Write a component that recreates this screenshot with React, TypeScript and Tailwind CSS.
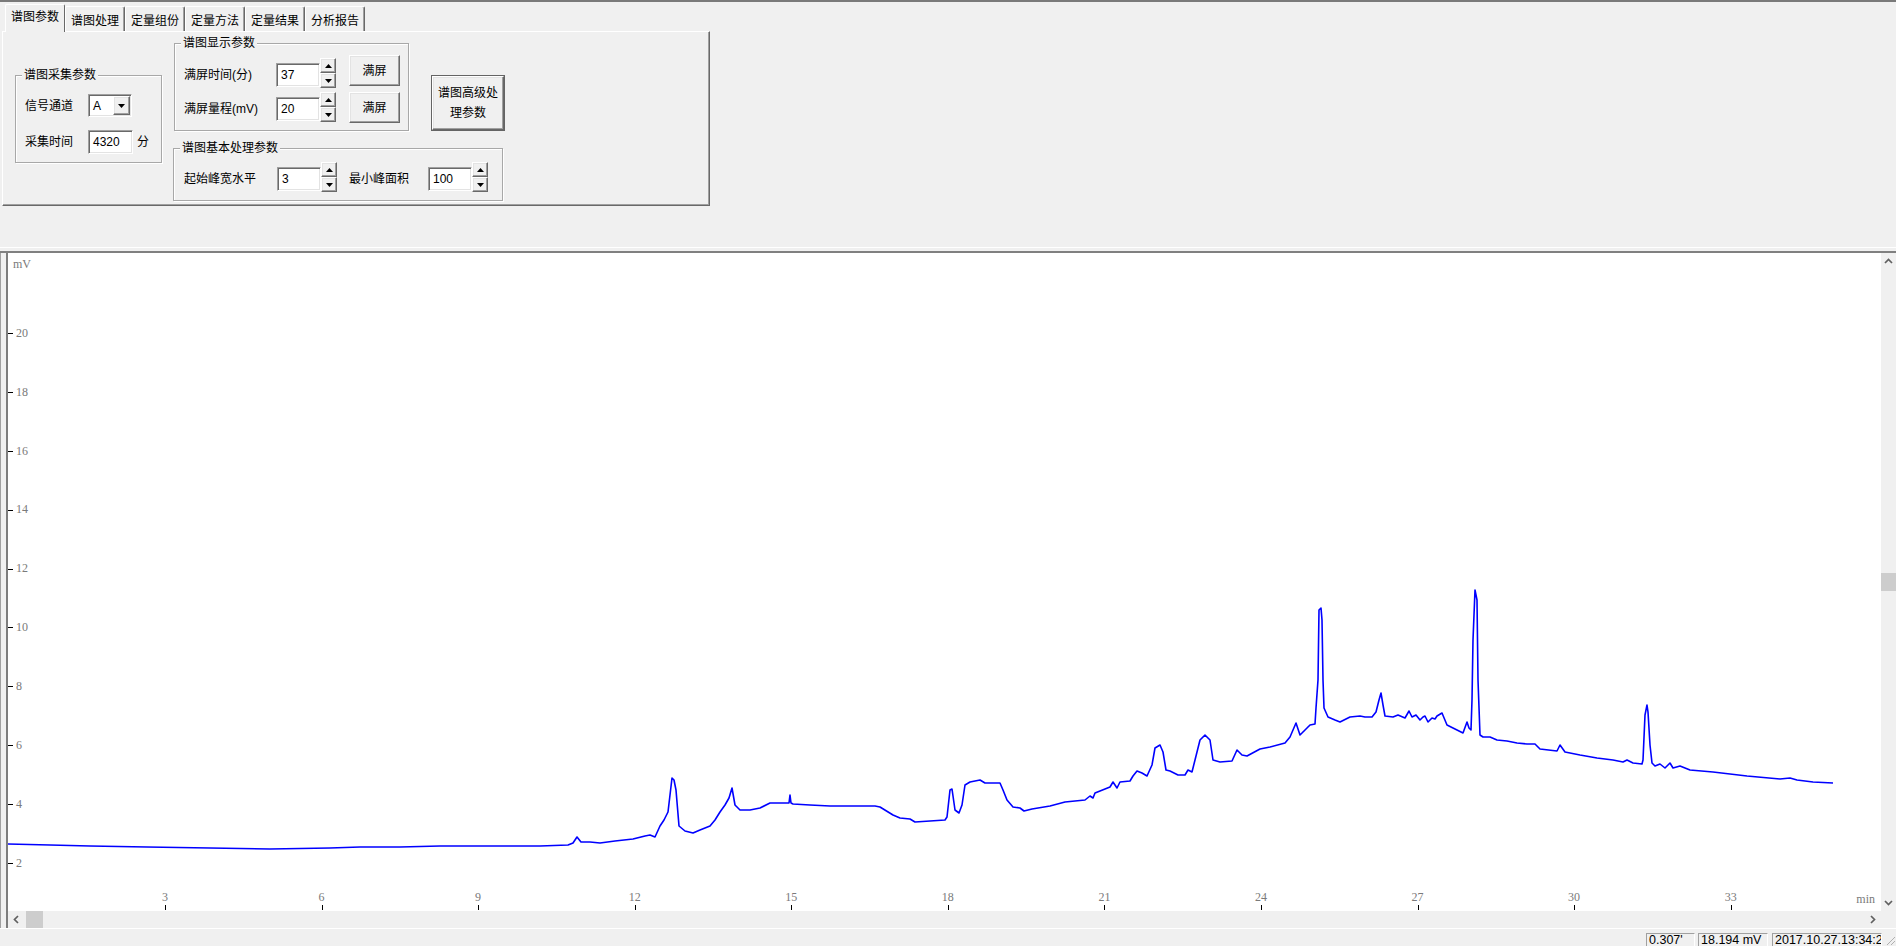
import React from "react";

const tabs = ["谱图参数", "谱图处理", "定量组份", "定量方法", "定量结果", "分析报告"];

const raised =
  "bg-[#f0f0f0] border border-t-white border-l-white border-r-[#696969] border-b-[#696969] shadow-[inset_-1px_-1px_0_#a0a0a0,inset_1px_1px_0_#e3e3e3]";
const sunken =
  "bg-white border border-t-[#a0a0a0] border-l-[#a0a0a0] border-r-white border-b-white shadow-[inset_1px_1px_0_#696969,inset_-1px_-1px_0_#e3e3e3]";

// plot scale, in screen px: 52.19 px per minute, 29.44 px per mV
const xOf = (t: number) => 8.4 + 52.19 * t;
const yOf = (mv: number) => 863 - (mv - 2) * 29.44;

// detector trace, sampled in screen px
const trace: [number, number][] = [
  [8, 844], [50, 845], [90, 846], [147, 847], [210, 848], [270, 849], [330, 848], [360, 847], [400, 847],
  [440, 846], [500, 846], [540, 846], [568, 845], [573, 843], [577, 837], [581, 842], [590, 842], [600, 843],
  [615, 841], [633, 839], [645, 836], [650, 835], [655, 837], [660, 826], [664, 820], [668, 812], [670, 795],
  [672, 778], [674, 780], [676, 790], [679, 826], [685, 831], [693, 833], [700, 830], [710, 826], [715, 820],
  [720, 812], [725, 805], [729, 798], [732, 788], [735, 805], [740, 810], [750, 810], [760, 808], [770, 803],
  [783, 803], [789, 803], [790, 795], [791, 803], [793, 804], [810, 805], [830, 806], [875, 806], [880, 807],
  [893, 815], [900, 818], [910, 819], [915, 822], [930, 821], [945, 820], [947, 817], [950, 790], [952, 789],
  [955, 810], [959, 813], [962, 805], [965, 785], [970, 782], [980, 780], [985, 783], [1000, 783], [1003, 790],
  [1007, 800], [1013, 807], [1020, 808], [1024, 811], [1032, 809], [1050, 806], [1065, 802], [1085, 800],
  [1090, 796], [1093, 798], [1095, 793], [1100, 791], [1110, 787], [1113, 782], [1117, 788], [1120, 782],
  [1130, 781], [1133, 776], [1137, 771], [1142, 773], [1147, 776], [1152, 765], [1155, 748], [1160, 745],
  [1163, 752], [1166, 770], [1170, 771], [1178, 775], [1185, 775], [1188, 770], [1192, 772], [1195, 760],
  [1200, 740], [1205, 735], [1210, 740], [1213, 760], [1220, 762], [1232, 761], [1237, 750], [1242, 755],
  [1247, 756], [1260, 749], [1270, 747], [1285, 743], [1290, 737], [1293, 730], [1296, 723], [1300, 735],
  [1305, 730], [1310, 725], [1315, 724], [1316, 708], [1318, 680], [1319, 610], [1321, 608], [1322, 620],
  [1323, 680], [1324, 708], [1328, 717], [1335, 720], [1340, 722], [1350, 717], [1360, 716], [1365, 717],
  [1372, 717], [1376, 712], [1379, 700], [1381, 693], [1383, 705], [1385, 716], [1393, 717], [1398, 715],
  [1405, 718], [1409, 711], [1412, 717], [1416, 715], [1420, 720], [1423, 717], [1425, 716], [1428, 722],
  [1432, 718], [1435, 719], [1437, 716], [1442, 713], [1447, 725], [1453, 728], [1457, 730], [1463, 733],
  [1467, 722], [1469, 728], [1471, 730], [1472, 700], [1473, 640], [1475, 590], [1477, 600], [1478, 680],
  [1480, 735], [1483, 737], [1490, 737], [1497, 740], [1507, 741], [1517, 743], [1527, 744], [1535, 744],
  [1540, 749], [1557, 751], [1560, 745], [1565, 752], [1580, 755], [1597, 758], [1613, 760], [1623, 762],
  [1627, 760], [1633, 763], [1642, 764], [1643, 760], [1645, 715], [1647, 705], [1648, 712], [1650, 745],
  [1652, 763], [1655, 766], [1660, 764], [1665, 768], [1670, 763], [1673, 768], [1680, 766], [1690, 770],
  [1713, 772], [1747, 776], [1780, 779], [1790, 778], [1797, 780], [1813, 782], [1833, 783],
];

function Tri({ up }: { up?: boolean }) {
  return (
    <svg width={7} height={4} viewBox="0 0 7 4">
      <path d={up ? "M0 4H7L3.5 0Z" : "M0 0H7L3.5 4Z"} fill="#000" />
    </svg>
  );
}

function Chevron({ dir }: { dir: "up" | "down" | "left" | "right" }) {
  const d = {
    up: "M1 6L4.5 2.5L8 6",
    down: "M1 3L4.5 6.5L8 3",
    left: "M6 1L2.5 4.5L6 8",
    right: "M3 1L6.5 4.5L3 8",
  }[dir];
  return (
    <svg width={9} height={9} viewBox="0 0 9 9">
      <path d={d} fill="none" stroke="#606060" strokeWidth={1.7} />
    </svg>
  );
}

function Spinner() {
  return (
    <div className="flex flex-col w-[16px] h-[30px]">
      <div className={raised + " flex-1 flex items-center justify-center"}>
        <Tri up />
      </div>
      <div className={raised + " flex-1 flex items-center justify-center"}>
        <Tri />
      </div>
    </div>
  );
}

function NumberField({ label, labelW, value }: { label: string; labelW: string; value: string }) {
  return (
    <div className="flex items-end">
      <div className={labelW + " h-[24px] mb-[1px] flex items-center leading-none"}>{label}</div>
      <div className={sunken + " w-[44px] h-[24px] mb-[1px] flex items-center px-[4px] leading-none"}>{value}</div>
      <Spinner />
    </div>
  );
}

function GroupBox({ title, className, children }: { title: string; className: string; children: React.ReactNode }) {
  return (
    <div
      className={
        "relative border border-[#a8a8a8] shadow-[inset_1px_1px_0_#fff,1px_1px_0_#fff] " + className
      }
    >
      <span className="absolute -top-[9px] left-[6px] bg-[#f0f0f0] px-[2px] leading-[16px]">{title}</span>
      {children}
    </div>
  );
}

function ParamTabs() {
  return (
    <div className="h-[245px] shrink-0">
      <div className="h-[29px] flex items-end pl-[5px]">
        {tabs.map((t, i) =>
          i === 0 ? (
            <div
              key={t}
              className="relative z-10 -mb-px h-[28px] px-[5px] pb-[3px] flex items-center bg-[#f0f0f0] border-t border-l border-r border-t-white border-l-white border-r-[#696969] rounded-t-[2px] leading-none"
            >
              {t}
            </div>
          ) : (
            <div
              key={t}
              className="h-[25px] px-[5px] pt-[3px] flex items-center border-t border-l border-r border-t-white border-l-white border-r-[#696969] shadow-[inset_-1px_0_0_#a0a0a0] rounded-t-[2px] leading-none"
            >
              {t}
            </div>
          )
        )}
      </div>
      <div className="ml-[2px] w-[708px] h-[175px] border border-t-white border-l-white border-r-[#696969] border-b-[#696969] shadow-[inset_-1px_-1px_0_#a0a0a0]">
        <div className="flex items-start pl-[12px] pt-[11px]">
          <GroupBox title="谱图采集参数" className="mt-[32px] w-[147px] h-[88px] pl-[9px] pt-[18px]">
            <div className="flex items-center h-[23px]">
              <div className="w-[63px] leading-none">信号通道</div>
              <div className={sunken + " w-[44px] h-[23px] flex items-center"}>
                <span className="flex-1 pl-[4px] leading-none">A</span>
                <div className={raised + " w-[17px] h-[19px] mr-[1px] flex items-center justify-center"}>
                  <Tri />
                </div>
              </div>
            </div>
            <div className="flex items-center h-[24px] mt-[13px]">
              <div className="w-[63px] leading-none">采集时间</div>
              <div className={sunken + " w-[45px] h-[24px] flex items-center px-[4px] leading-none"}>4320</div>
              <span className="ml-[4px] leading-none">分</span>
            </div>
          </GroupBox>

          <div className="ml-[11px] flex flex-col">
            <div className="flex items-start">
              <GroupBox title="谱图显示参数" className="ml-[1px] w-[235px] h-[88px] pl-[9px] pt-[11px]">
                <div className="flex items-start">
                  <div className="mt-[3px]">
                    <NumberField label="满屏时间(分)" labelW="w-[92px]" value="37" />
                  </div>
                  <button className={raised + " ml-[13px] w-[51px] h-[31px] leading-none"}>满屏</button>
                </div>
                <div className="flex items-start mt-[4px]">
                  <NumberField label="满屏量程(mV)" labelW="w-[92px]" value="20" />
                  <button className={raised + " ml-[13px] w-[51px] h-[31px] leading-none"}>满屏</button>
                </div>
              </GroupBox>
              <div className="ml-[22px] mt-[32px] border border-[#646464]">
                <button className={raised + " w-[72px] h-[54px] px-[4px] leading-[20px] text-center"}>
                  谱图高级处理参数
                </button>
              </div>
            </div>
            <GroupBox title="谱图基本处理参数" className="mt-[17px] w-[330px] h-[53px] pl-[10px] pt-[13px]">
              <div className="flex items-start">
                <NumberField label="起始峰宽水平" labelW="w-[93px]" value="3" />
                <div className="ml-[12px]">
                  <NumberField label="最小峰面积" labelW="w-[79px]" value="100" />
                </div>
              </div>
            </GroupBox>
          </div>
        </div>
      </div>
    </div>
  );
}

function Plot() {
  const mvTicks = [2, 4, 6, 8, 10, 12, 14, 16, 18, 20];
  const minTicks = [3, 6, 9, 12, 15, 18, 21, 24, 27, 30, 33];
  const label = { fontFamily: "'Liberation Serif', serif", fontSize: 12, fill: "#7a7a7a" };
  return (
    <div className="w-[1873px] h-[658px] bg-white">
      <svg width={1873} height={658} viewBox="8 253 1873 658">
        <text x={13} y={265} dominantBaseline="middle" {...label}>
          mV
        </text>
        {mvTicks.map((v) => (
          <g key={v}>
            <line x1={8} x2={13} y1={Math.round(yOf(v)) + 0.5} y2={Math.round(yOf(v)) + 0.5} stroke="#000" shapeRendering="crispEdges" />
            <text x={16} y={yOf(v) + 1} dominantBaseline="middle" {...label}>
              {v}
            </text>
          </g>
        ))}
        {minTicks.map((t) => (
          <g key={t}>
            <line x1={Math.round(xOf(t)) + 0.5} x2={Math.round(xOf(t)) + 0.5} y1={905} y2={910} stroke="#000" shapeRendering="crispEdges" />
            <text x={xOf(t)} y={898} textAnchor="middle" dominantBaseline="middle" {...label}>
              {t}
            </text>
          </g>
        ))}
        <text x={1875} y={900} textAnchor="end" dominantBaseline="middle" {...label}>
          min
        </text>
        <polyline
          points={trace.map(([x, y]) => `${x},${y}`).join(" ")}
          fill="none"
          stroke="#0000ff"
          strokeWidth={1.6}
          strokeLinejoin="round"
        />
      </svg>
    </div>
  );
}

function ChartView() {
  return (
    <div className="h-[677px] shrink-0 border-t-2 border-t-[#808080] flex">
      <div className="w-[8px] border-l border-r-2 border-l-[#a0a0a0] border-r-[#7d7d7d]" />
      <div className="flex-1 flex flex-col">
        <div className="flex h-[658px]">
          <Plot />
          <div className="w-[15px] flex flex-col bg-[#f0f0f0]">
            <div className="h-[17px] flex items-center justify-center">
              <Chevron dir="up" />
            </div>
            <div className="mt-[303px] h-[18px] bg-[#cdcdcd]" />
            <div className="flex-1" />
            <div className="h-[17px] flex items-center justify-center">
              <Chevron dir="down" />
            </div>
          </div>
        </div>
        <div className="flex h-[17px] bg-[#f0f0f0]">
          <div className="w-[17px] flex items-center justify-center">
            <Chevron dir="left" />
          </div>
          <div className="ml-[1px] w-[17px] bg-[#cdcdcd]" />
          <div className="flex-1" />
          <div className="w-[17px] flex items-center justify-center">
            <Chevron dir="right" />
          </div>
          <div className="w-[15px]" />
        </div>
      </div>
    </div>
  );
}

function StatusBar() {
  const panel =
    "mt-[3px] h-[13px] border-t border-l border-r border-t-[#a0a0a0] border-l-[#a0a0a0] border-r-white px-[2px] leading-[12px] whitespace-nowrap overflow-hidden";
  return (
    <div className="h-[16px] shrink-0 flex items-start justify-end overflow-hidden text-[12.5px]">
      <div className={panel + " w-[49px]"}>0.307'</div>
      <div className={panel + " ml-[3px] w-[70px]"}>18.194 mV</div>
      <div className={panel + " ml-[4px] w-[110px]"}>2017.10.27.13:34:26</div>
      <div className="w-[14px] h-[16px] flex items-end justify-end">
        <svg width={12} height={12} viewBox="0 0 12 12">
          <path d="M11 3L3 11M11 7L7 11" stroke="#b0b0b0" strokeWidth={1} />
        </svg>
      </div>
    </div>
  );
}

export default function App() {
  return (
    <div className="w-[1896px] h-[946px] overflow-hidden bg-[#f0f0f0] text-[12px] text-black font-['Liberation_Sans','Noto_Sans_CJK_SC',sans-serif] flex flex-col select-none">
      <div className="h-[2px] shrink-0 bg-[#7a7a7a]" />
      <ParamTabs />
      <div className="h-px shrink-0 bg-white" />
      <div className="h-[3px] shrink-0" />
      <ChartView />
      <div className="h-[2px] shrink-0 border-t border-t-white" />
      <StatusBar />
    </div>
  );
}
